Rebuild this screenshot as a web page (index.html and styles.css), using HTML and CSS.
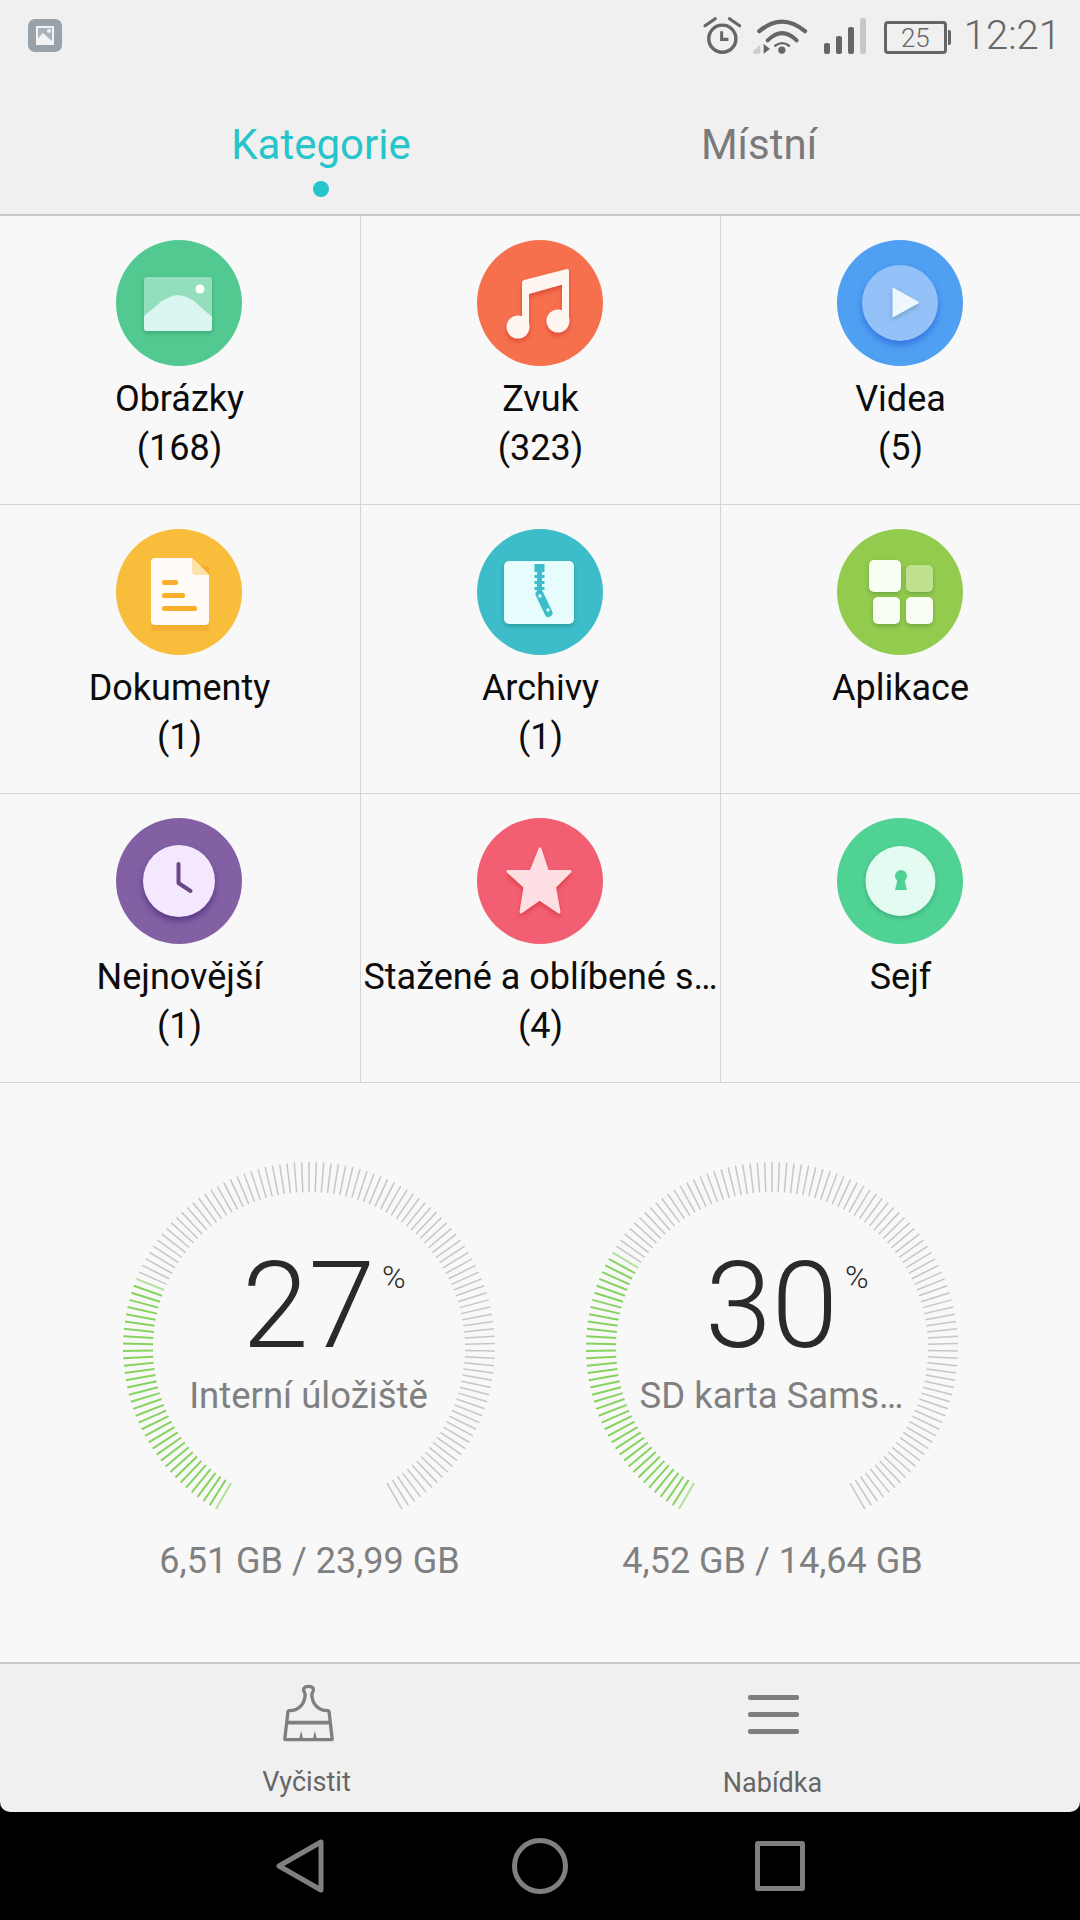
FILE: index.html
```html
<!DOCTYPE html>
<html lang="cs">
<head>
<meta charset="utf-8">
<title>Soubory</title>
<link rel="stylesheet" href="styles.css">
</head>
<body>
<div class="screen">
  <header class="statusbar">
    <svg class="st-app" viewBox="0 0 34 33"><rect width="34" height="33" rx="7" fill="#9aa2a9"/><rect x="8" y="7" width="18" height="19" fill="#f1f3f4"/><rect x="10" y="9" width="14" height="15" fill="#aab1b7"/><path d="M10 19l5-5 9 8v2H10z" fill="#f1f3f4"/><circle cx="21" cy="12" r="2" fill="#f1f3f4"/></svg>
    <div class="st-right">
      <svg class="st-alarm" viewBox="40 33 112 115"><circle cx="97" cy="100" r="40" fill="none" stroke="#666" stroke-width="10"/><path d="M95 78v24h20" fill="none" stroke="#666" stroke-width="9"/><path d="M46 62L76 41M118 41l30 21" fill="none" stroke="#666" stroke-width="9" stroke-linecap="round"/></svg>
      <svg class="st-wifi" viewBox="188 35 166 115"><path d="M207 78Q275 20 345 78" fill="none" stroke="#666" stroke-width="13" stroke-linecap="round"/><path d="M232 106Q276 62 320 106" fill="none" stroke="#666" stroke-width="12" stroke-linecap="round"/><circle cx="275" cy="135" r="11" fill="#666"/><path d="M255 122Q276 106 297 122" fill="none" stroke="#666" stroke-width="7" stroke-linecap="round"/><path d="M189 138l21-20v28h-21z" fill="#ccc"/><path d="M220 116l19 16-19 14z" fill="#666"/></svg>
      <div class="st-signal"><i class="b1"></i><i class="b2"></i><i class="b3"></i><i class="b4"></i></div>
      <div class="st-battery"><span>25</span></div>
      <div class="st-time">12:21</div>
    </div>
  </header>

  <nav class="tabs">
    <div class="tab tab-active">Kategorie<i class="tab-dot"></i></div>
    <div class="tab">Místní</div>
  </nav>

  <section class="grid">
    <div class="cell">
      <svg class="ico" viewBox="0 0 126 126"><circle cx="63" cy="63" r="63" fill="#53c992"/><g class="lift"><rect x="28" y="37" width="68" height="54" rx="3" fill="#93dfbc"/><path d="M28 76L46 61Q56 55 62 55Q68 55 78 61L96 77v11a3 3 0 0 1-3 3H31a3 3 0 0 1-3-3z" fill="#dbf5f0"/></g><circle cx="84" cy="49" r="4.5" fill="#fff"/></svg>
      <div class="name">Obrázky</div><div class="name">(168)</div>
    </div>
    <div class="cell">
      <svg class="ico" viewBox="0 0 126 126"><circle cx="63" cy="63" r="63" fill="#f6704e"/><g class="lift-red" fill="#fff6f1"><path d="M45 43a3 3 0 0 1 2-3l43-11a2 2 0 0 1 2 2v50H85V44.700L52 54v33h-7z"/><ellipse cx="41" cy="87" rx="11.500" ry="11.500"/><ellipse cx="81" cy="81" rx="11.500" ry="11.500"/></g></svg>
      <div class="name">Zvuk</div><div class="name">(323)</div>
    </div>
    <div class="cell">
      <svg class="ico" viewBox="0 0 126 126"><circle cx="63" cy="63" r="63" fill="#4f9ff2"/><circle class="lift-blue" cx="63" cy="63" r="38" fill="#93c1f8"/><path class="lift" d="M56 48l26 14.500L56 77z" fill="#eef6fe" stroke="#eef6fe" stroke-width="1" stroke-linejoin="round"/></svg>
      <div class="name">Videa</div><div class="name">(5)</div>
    </div>
    <div class="cell">
      <svg class="ico" viewBox="0 0 126 126"><circle cx="63" cy="63" r="63" fill="#f8bd3a"/><path d="M35 37h58v61a4 4 0 0 1-4 4H39a4 4 0 0 1-4-4z" fill="#f4ae32"/><path d="M39 29h37l17 17v46a4 4 0 0 1-4 4H39a4 4 0 0 1-4-4V33a4 4 0 0 1 4-4z" fill="#fffcf7"/><path d="M76 29l17 17H80a4 4 0 0 1-4-4z" fill="#fbe2a8"/><g fill="#f9ae2c"><rect x="46" y="51" width="16" height="5" rx="2"/><rect x="46" y="64" width="23" height="5" rx="2"/><rect x="46" y="77" width="35" height="5" rx="2"/></g></svg>
      <div class="name">Dokumenty</div><div class="name">(1)</div>
    </div>
    <div class="cell">
      <svg class="ico" viewBox="0 0 126 126"><circle cx="63" cy="63" r="63" fill="#3dbcc9"/><rect class="lift" x="27" y="32" width="70" height="63" rx="5" fill="#e6fcfd"/><g fill="#3dbcc9"><rect x="57.500" y="35" width="10" height="8"/><rect x="60" y="43" width="5" height="20"/><rect x="57.500" y="46" width="10" height="3"/><rect x="57.500" y="52" width="10" height="3"/><rect x="57.500" y="58" width="10" height="3"/></g><path d="M62.500 65l9 19" fill="none" stroke="#3dbcc9" stroke-width="8" stroke-linecap="round"/><circle cx="63" cy="67" r="1.700" fill="#e6fcfd"/><circle cx="71" cy="81" r="1.700" fill="#e6fcfd"/></svg>
      <div class="name">Archivy</div><div class="name">(1)</div>
    </div>
    <div class="cell">
      <svg class="ico" viewBox="0 0 126 126"><circle cx="63" cy="63" r="63" fill="#93cb4e"/><g class="lift"><rect x="32" y="31" width="32" height="32" rx="5" fill="#f9fef3"/><rect x="69" y="36" width="27" height="27" rx="5" fill="#bfe08e"/><rect x="36" y="68" width="27" height="27" rx="5" fill="#f9fef3"/><rect x="69" y="68" width="27" height="27" rx="5" fill="#f9fef3"/></g></svg>
      <div class="name">Aplikace</div>
    </div>
    <div class="cell">
      <svg class="ico" viewBox="0 0 126 126"><circle cx="63" cy="63" r="63" fill="#8360a4"/><circle class="lift-purple" cx="63" cy="63" r="36" fill="#f4e8fe"/><path d="M62.500 46v19l12 8" fill="none" stroke="#694a86" stroke-width="4" stroke-linecap="round" stroke-linejoin="round"/></svg>
      <div class="name">Nejnovější</div><div class="name">(1)</div>
    </div>
    <div class="cell">
      <svg class="ico" viewBox="0 0 126 126"><circle cx="63" cy="63" r="63" fill="#f25f72"/><path class="lift-red" d="M63 31l7.500 22.500H93L77.500 69 82 94 62.500 81 44 94l4-25L31 53.500h23z" fill="#fedfe3" stroke="#fedfe3" stroke-width="3" stroke-linejoin="round"/></svg>
      <div class="name">Stažené a oblíbené s…</div><div class="name">(4)</div>
    </div>
    <div class="cell">
      <svg class="ico" viewBox="0 0 126 126"><circle cx="63" cy="63" r="63" fill="#4fd294"/><circle class="lift" cx="63.500" cy="63" r="35" fill="#e4fbf2"/><circle cx="64" cy="58" r="6" fill="#4fd294"/><path d="M61 60h6l3 12H58z" fill="#4fd294"/></svg>
      <div class="name">Sejf</div>
    </div>
  </section>

  <section class="storage">
    <div class="volume">
      <div class="gauge">
        <svg class="dial" viewBox="-190 -190 380 360" data-percent="27"></svg>
        <div class="readout">
          <div class="percent">27<sup class="unit">%</sup></div>
          <div class="label">Interní úložiště</div>
        </div>
      </div>
      <div class="usage">6,51 GB / 23,99 GB</div>
    </div>
    <div class="volume">
      <div class="gauge">
        <svg class="dial" viewBox="-190 -190 380 360" data-percent="30"></svg>
        <div class="readout">
          <div class="percent">30<sup class="unit">%</sup></div>
          <div class="label">SD karta Sams…</div>
        </div>
      </div>
      <div class="usage">4,52 GB / 14,64 GB</div>
    </div>
  </section>

  <footer class="toolbar">
    <div class="tool">
      <svg class="tool-ico" viewBox="95 37 158 180"><path d="M117 120c30 0 46-22 47-48 0-6-5-10-5-15 0-6 7-10 15-10s15 4 15 10c0 5-5 9-5 15 1 26 17 48 47 48 2 0 5 2 5 6l9 78c0 2-1 3-3 3H106c-2 0-3-1-3-3l9-78c0-4 3-6 5-6z" fill="none" stroke="#7f7f7f" stroke-width="10" stroke-linejoin="round"/><path d="M112 156h124" stroke="#7f7f7f" stroke-width="11"/><path d="M146 204l6-24 6 24zM187 204l6-24 6 24z" fill="#7f7f7f"/></svg>
      <div class="tool-name tool-name-shift">Vyčistit</div>
    </div>
    <div class="tool">
      <div class="menu-ico"><i></i><i></i><i></i></div>
      <div class="tool-name tool-name-right">Nabídka</div>
    </div>
  </footer>

  <nav class="navbar">
    <svg class="nav-back" viewBox="0 0 50 56"><path d="M46 4v48L4 28z" fill="none" stroke="#808080" stroke-width="5" stroke-linejoin="round"/></svg>
    <i class="nav-home"></i>
    <i class="nav-recent"></i>
  </nav>
</div>
<script src="gauges.js"></script>
</body>
</html>
```

FILE: styles.css
```css
* { box-sizing: border-box; }
html, body { margin: 0; padding: 0; background: #000; }
body { font-family: Roboto, "Noto Sans", sans-serif; }
i { display: block; }

.screen { width: 1080px; height: 1920px; display: flex; flex-direction: column; overflow: hidden; }

/* status bar */
.statusbar { height: 72px; flex: none; display: flex; justify-content: space-between; align-items: flex-start; padding: 0 19px 0 28px; background: #f0f0f0; }
.st-app { width: 34px; height: 33px; margin-top: 19px; }
.st-right { display: flex; align-items: flex-start; }
.st-alarm { width: 38px; height: 39px; margin-top: 16px; }
.st-wifi { width: 55px; height: 38px; margin: 17px 0 0 12px; }
.st-signal { display: flex; align-items: flex-end; gap: 6px; height: 36px; margin: 18px 0 0 16px; }
.st-signal i { width: 6px; background: #666; border-radius: 2px; }
.st-signal .b1 { height: 11px; }
.st-signal .b2 { height: 18px; }
.st-signal .b3 { height: 27px; }
.st-signal .b4 { height: 36px; background: #c8c8c8; }
.st-battery { position: relative; width: 63px; height: 33px; margin: 21px 5px 0 18px; border: 3px solid #666; border-radius: 4px; display: flex; align-items: center; justify-content: center; color: #666; font-size: 26px; font-weight: 300; line-height: 1; }
.st-battery::after { content: ""; position: absolute; right: -7px; top: 6px; width: 3px; height: 15px; background: #666; border-radius: 0 2px 2px 0; }
.st-time { margin: 12px 0 0 12px; font-size: 40px; font-weight: 300; line-height: 48px; color: #666; }

/* tabs */
.tabs { height: 144px; flex: none; display: grid; grid-template-columns: 438px 438px; padding: 0 102px; background: #f0f0f0; border-bottom: 2px solid #c8c8c8; }
.tab { display: flex; flex-direction: column; align-items: center; padding-top: 47px; font-size: 42px; font-weight: 400; line-height: 52px; color: #7a7a7a; }
.tab-active { color: #26c4cb; }
.tab-dot { width: 16px; height: 16px; margin-top: 10px; border-radius: 50%; background: #26c4cb; }

/* category grid */
.grid { flex: none; display: grid; grid-template-columns: repeat(3, 360px); grid-auto-rows: 289px; background: #f8f8f8; }
.cell { display: flex; flex-direction: column; align-items: center; padding-top: 24px; border-left: 1px solid #d4d4d4; border-bottom: 1.500px solid #d4d4d4; }
.ico { width: 126px; height: 126px; flex: none; margin: 0 2px 9px 0; overflow: visible; }
.cell:nth-child(3n+1) { border-left: none; padding-right: 1px; }
.cell:nth-child(3n+1) .ico { margin-right: 1px; }
.name { font-size: 36px; line-height: 49px; color: #0c0c0c; white-space: nowrap; }
.lift { filter: drop-shadow(0 2px 2px rgba(0, 60, 30, .25)); }
.lift-red { filter: drop-shadow(0 3px 2px rgba(200, 40, 30, .5)); }
.lift-blue { filter: drop-shadow(0 4px 3px rgba(40, 100, 220, .7)); }
.lift-purple { filter: drop-shadow(0 4px 3px rgba(60, 30, 110, .6)); }

/* storage gauges */
.storage { flex: 1; display: grid; grid-template-columns: 463px 463px; padding: 75px 77px 0; background: #f8f8f8; align-content: start; }
.volume { display: flex; flex-direction: column; align-items: center; }
.gauge { display: grid; justify-items: center; }
.dial, .readout { grid-area: 1 / 1; }
.dial { width: 380px; height: 360px; }
.readout { display: flex; flex-direction: column; align-items: center; padding-top: 88px; }
.percent { position: relative; font-size: 120px; font-weight: 300; line-height: 120px; color: #2a2a2a; }
.unit { position: absolute; left: 100%; top: 13px; margin-left: 7px; font-size: 32px; font-weight: 300; line-height: 36px; vertical-align: baseline; }
.label { margin-top: 5px; font-size: 36.500px; line-height: 50px; color: #808080; white-space: nowrap; }
.usage { margin-top: 18px; padding-left: 2px; font-size: 36px; line-height: 50px; color: #808080; }

/* bottom toolbar */
.toolbar { height: 150px; flex: none; display: grid; grid-template-columns: 463px 463px; padding: 0 77px; background: #f0f0f0; border-top: 2px solid #c8c8c8; border-radius: 0 0 10px 10px; }
.tool { display: flex; flex-direction: column; align-items: center; }
.tool-ico { width: 53px; height: 60px; margin-top: 19px; }
.menu-ico { display: flex; flex-direction: column; justify-content: space-between; width: 51px; height: 39px; margin: 31px 0 10px 4px; }
.menu-ico i { height: 5px; background: #7f7f7f; border-radius: 2px; }
.tool-name { margin-top: 22px; font-size: 27px; line-height: 34px; color: #666; }
.tool-name-shift { padding-right: 4px; }
.tool-name-right { padding-left: 2px; }

/* navigation bar */
.navbar { height: 108px; flex: none; display: grid; grid-template-columns: repeat(3, 240px); padding: 0 180px; align-items: center; justify-items: center; background: #000; }
.nav-back { width: 50px; height: 56px; }
.nav-home { width: 56px; height: 56px; border: 5px solid #808080; border-radius: 50%; }
.nav-recent { width: 50px; height: 50px; border: 5px solid #808080; border-radius: 3px; }
```

FILE: gauges.js
```js
// Builds the tick ring of each storage dial from its data-percent.
var SVG_NS = 'http://www.w3.org/2000/svg';
var START = 30, SWEEP = 300, STEPS = 132, R_IN = 156, R_OUT = 186;

document.querySelectorAll('.dial').forEach(function (dial) {
  var percent = Number(dial.getAttribute('data-percent'));
  var filled = Math.round(STEPS * percent / 100);
  for (var i = 0; i <= STEPS; i++) {
    var a = (START + SWEEP * i / STEPS) * Math.PI / 180;
    var s = Math.sin(a), c = Math.cos(a);
    var line = document.createElementNS(SVG_NS, 'line');
    line.setAttribute('x1', (-s * R_IN).toFixed(2));
    line.setAttribute('y1', (c * R_IN).toFixed(2));
    line.setAttribute('x2', (-s * R_OUT).toFixed(2));
    line.setAttribute('y2', (c * R_OUT).toFixed(2));
    var on = i <= filled;
    line.setAttribute('stroke', on ? '#86d35f' : '#c6c6c6');
    line.setAttribute('stroke-width', on ? '2' : '1.5');
    if (i === 0 || i === filled) line.setAttribute('opacity', '0.6');
    dial.appendChild(line);
  }
});
```
